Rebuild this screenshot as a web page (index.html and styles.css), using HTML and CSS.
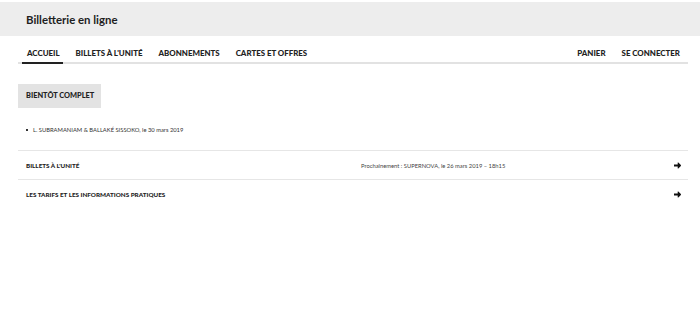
FILE: index.html
```html
<!DOCTYPE html>
<html lang="fr">
<head>
  <meta charset="UTF-8" />
  <meta name="viewport" content="width=device-width, initial-scale=1.0"/>
  <title>Billetterie en ligne</title>
<link rel="stylesheet" href="styles.css">
</head>
<body>

  <div class="topbar">
    <div class="site-title">Billetterie en ligne</div>
  </div>

  <div class="container">
    <div class="nav">
      <a href="#" class="nav-item active">Accueil</a>
      <a href="#" class="nav-item">Billets à l'unité</a>
      <a href="#" class="nav-item">Abonnements</a>
      <a href="#" class="nav-item">Cartes et offres</a>
      <div class="nav-spacer"></div>
      <a href="#" class="nav-item">Panier</a>
      <a href="#" class="nav-item">Se connecter</a>
    </div>

    <div class="badge">Bientôt complet</div>

    <ul class="events">
      <li>L. SUBRAMANIAM &amp; BALLAKÉ SISSOKO, le 30 mars 2019</li>
    </ul>

    <div class="rows">
      <a href="#" class="row">
        <span class="row-title">Billets à l'unité</span>
        <span class="row-info">Prochainement : SUPERNOVA, le 26 mars 2019 – 18h15</span>
        <svg class="arrow" viewBox="0 0 14 14"><path d="M0 5.2h7.4V1.6c0-.7.8-1 1.3-.5l5 5.1c.4.4.4 1.2 0 1.6l-5 5.1c-.5.5-1.3.2-1.3-.5V8.8H0z"/></svg>
      </a>
      <a href="#" class="row">
        <span class="row-title">Les tarifs et les informations pratiques</span>
        <span class="row-info"></span>
        <svg class="arrow" viewBox="0 0 14 14"><path d="M0 5.2h7.4V1.6c0-.7.8-1 1.3-.5l5 5.1c.4.4.4 1.2 0 1.6l-5 5.1c-.5.5-1.3.2-1.3-.5V8.8H0z"/></svg>
      </a>
    </div>
  </div>

</body>
</html>
```

FILE: styles.css
```css
body {
  font-family: Lato, "Open Sans", sans-serif;
  background-color: #fff;
  color: #222;
  margin: 0;
  padding: 0;
}

a {
  color: inherit;
  text-decoration: none;
}

.topbar {
  margin-top: 2px;
  height: 34px;
  background: #ededed;
  display: flex;
  align-items: center;
  padding-left: 26px;
}

.site-title {
  font-size: 11.4px;
  font-weight: bold;
  color: #1e1e1e;
}

.container {
  padding: 0 12px 0 18px;
}

.nav {
  display: flex;
  margin-top: 12px;
  padding-left: 4px;
  border-bottom: 2px solid #e2e2e2;
}

.nav-item {
  font-size: 7.9px;
  line-height: 10px;
  font-weight: 900;
  text-transform: uppercase;
  padding: 0 3px 4px 5px;
  margin-right: 8px;
  margin-bottom: -2px;
  border-bottom: 2px solid transparent;
}

.nav-item:last-child {
  margin-right: 5px;
}

.nav-item.active {
  border-bottom-color: #222;
}

.nav-spacer {
  flex: 1;
}

.badge {
  display: inline-block;
  margin-top: 20px;
  height: 24px;
  line-height: 24px;
  padding: 0 7px 0 8px;
  background: #e3e3e3;
  font-size: 7.4px;
  font-weight: 900;
  text-transform: uppercase;
}

.events {
  list-style: none;
  margin: 17px 0 0;
  padding-left: 8px;
  font-size: 5.8px;
  color: #333;
}

.events li {
  line-height: 10px;
  display: flex;
  align-items: center;
}

.events li::before {
  content: "";
  width: 2px;
  height: 2px;
  background: #333;
  margin-right: 5px;
}

.rows {
  margin-top: 15px;
}

.row {
  display: grid;
  grid-template-columns: 335px 1fr auto;
  align-items: center;
  height: 28px;
  padding: 0 7px 0 8px;
  border-top: 1px solid #e6e6e6;
}

.row-title {
  font-size: 6.3px;
  font-weight: 900;
  text-transform: uppercase;
}

.row-info {
  font-size: 5.8px;
  color: #444;
}

.arrow {
  width: 7px;
  height: 7px;
  fill: #111;
}
```
